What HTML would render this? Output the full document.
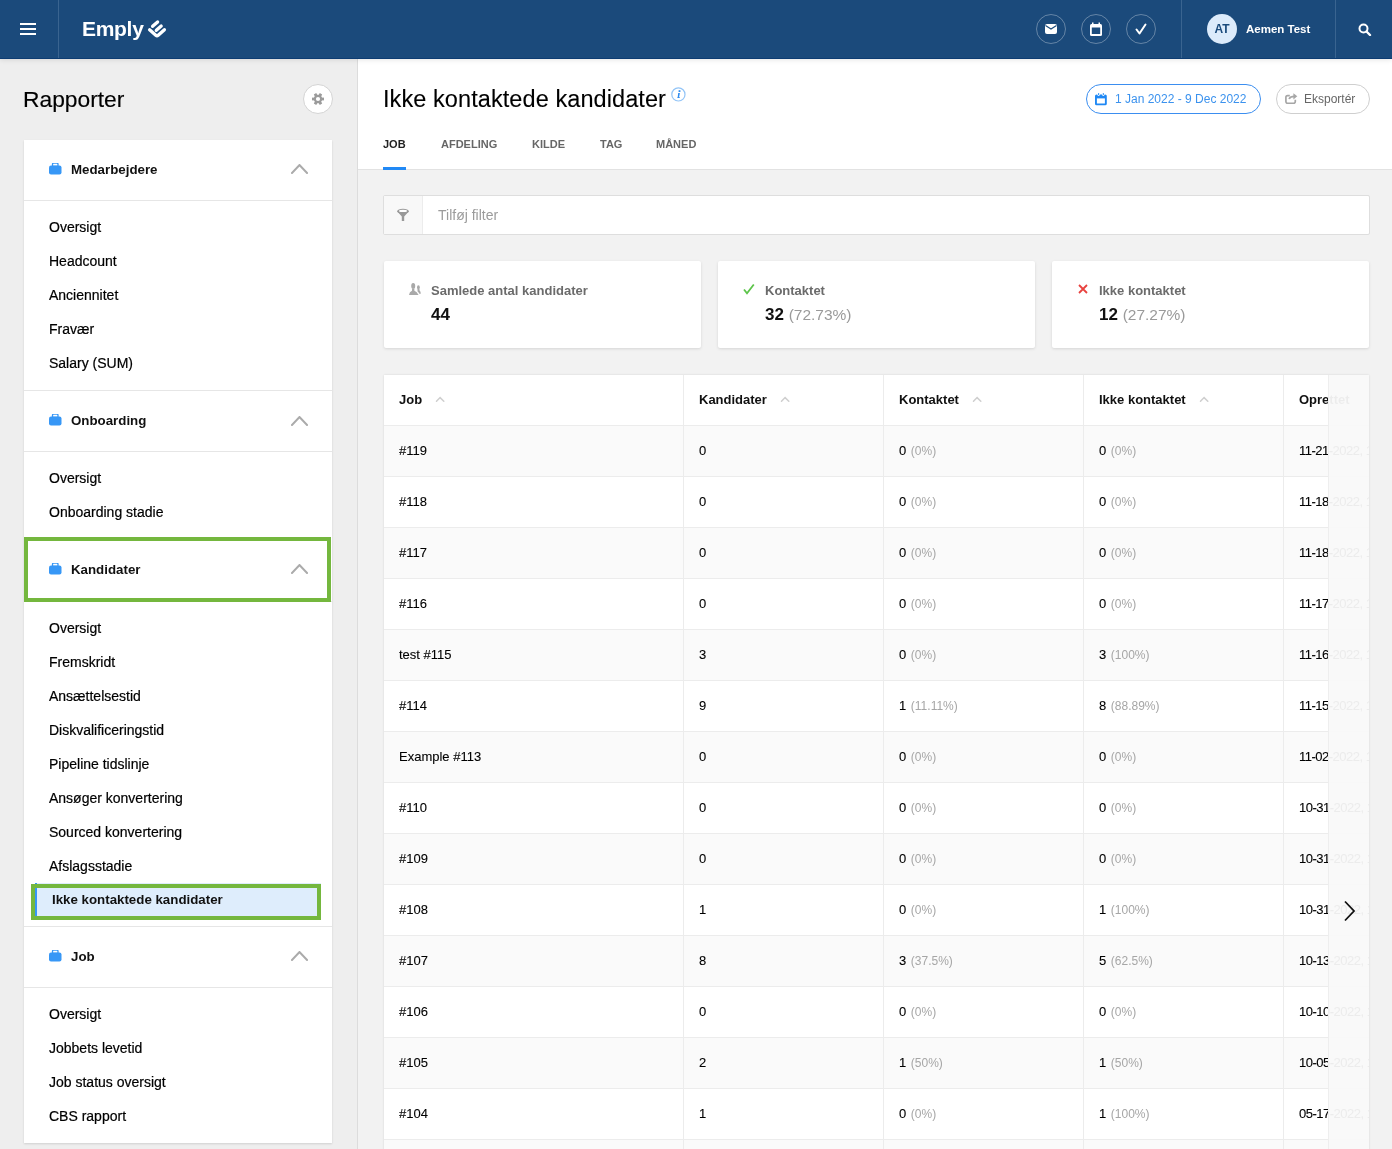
<!DOCTYPE html>
<html><head><meta charset="utf-8">
<style>
*{box-sizing:border-box;margin:0;padding:0}
html,body{width:1392px;height:1149px;overflow:hidden;background:#f2f2f2;font-family:"Liberation Sans",sans-serif;color:#1a1a1a}
.a{position:absolute;white-space:nowrap}
#hdr{position:absolute;left:0;top:0;width:1392px;height:59px;background:#1b4a7b;border-bottom:1px solid #0d3c72;z-index:5;box-shadow:0 1px 5px rgba(0,0,0,.10)}
.vdiv{position:absolute;top:0;width:1px;height:58px;background:#3a6490}
.hc{position:absolute;top:14px;width:30px;height:30px;border:1px solid rgba(255,255,255,.32);border-radius:50%}
.hc svg{position:absolute;left:0;top:0}
#side{position:absolute;left:0;top:59px;width:358px;height:1090px;background:#eeeeee;border-right:1px solid #dcdcdc}
#card{position:absolute;left:24px;top:140px;width:308px;height:1003px;background:#fff;box-shadow:0 1px 2px rgba(0,0,0,.13)}
.line{position:absolute;left:0;width:308px;height:1px;background:#e6e6e6}
.st{font-weight:bold;font-size:13.3px;line-height:20px;color:#111}
.it{font-size:14px;line-height:20px;color:#000;-webkit-text-stroke:0.2px #000}
#main{position:absolute;left:358px;top:59px;width:1034px;height:1090px;background:#f2f2f2}
#mtop{position:absolute;left:0;top:0;width:1034px;height:111px;background:#fff;border-bottom:1px solid #e2e2e2}
.tab{font-weight:bold;font-size:11px;line-height:20px;color:#666}
.scard{position:absolute;top:261px;width:317px;height:87px;background:#fff;border-radius:2px;box-shadow:0 1px 3px rgba(0,0,0,.12)}
.sl{font-weight:bold;font-size:13px;line-height:20px;color:#6b6b6b}
.sv{font-weight:bold;font-size:17px;line-height:22px;color:#111}
.sp{font-weight:normal;font-size:15.5px;color:#9a9a9a}
#tbl{position:absolute;left:384px;top:375px;width:985px;height:800px;background:#fff;box-shadow:0 0 2px rgba(0,0,0,.12);overflow:hidden}
.row{position:absolute;left:0;width:985px;height:51px;border-bottom:1px solid #ececec}
.vcol{position:absolute;top:0;width:1px;height:800px;background:#ececec}
.th{font-weight:bold;font-size:13px;line-height:20px;color:#111}
.td{font-size:13px;line-height:20px;color:#000;-webkit-text-stroke:0.1px #000}
.pc{font-size:12px;color:#a6a6a6;-webkit-text-stroke:0;margin-left:1px}
</style></head><body>
<div id="wrap" style="position:absolute;left:0;top:0;width:1392px;height:1149px;overflow:hidden;will-change:transform">
<div id="hdr"><svg class="a" style="left:20px;top:23px" width="16" height="12" viewBox="0 0 16 12"><rect x="0" y="0" width="16" height="2" fill="#fff"/><rect x="0" y="5" width="16" height="2" fill="#fff"/><rect x="0" y="10" width="16" height="2" fill="#fff"/></svg><div class="vdiv" style="left:58px"></div><div class="a" style="left:82px;top:16.4px;font-weight:bold;font-size:21px;line-height:26px;color:#fff;letter-spacing:-0.3px">Emply</div><svg class="a" style="left:140px;top:14px" width="32" height="28" viewBox="0 0 32 28"><path d="M9.6 15.8 L15.8 21.3 Q17 22.3 18.2 21.3 L24.4 15.7" stroke="#fff" stroke-width="3.3" fill="none" stroke-linecap="round" stroke-linejoin="round"/><path d="M12.6 12.3 L17.6 7.9 M16.3 16.3 L21.2 12" stroke="#fff" stroke-width="3.3" fill="none" stroke-linecap="round"/></svg><div class="hc" style="left:1036px"><svg width="28" height="28" viewBox="0 0 28 28"><rect x="8" y="9" width="12" height="10" rx="2" fill="#fff"/><path d="M8.5 10.5 L14 14 L19.5 10.5" stroke="#1b4b7c" stroke-width="1.2" fill="none"/></svg></div><div class="hc" style="left:1081px"><svg width="28" height="28" viewBox="0 0 28 28"><rect x="8" y="9" width="12" height="12" rx="1.5" fill="#fff"/><rect x="9.8" y="12.5" width="8.4" height="6.5" fill="#1b4b7c"/><rect x="10" y="7.5" width="1.5" height="3" fill="#fff"/><rect x="16.5" y="7.5" width="1.5" height="3" fill="#fff"/></svg></div><div class="hc" style="left:1126px"><svg width="28" height="28" viewBox="0 0 28 28"><path d="M9.5 14.5 L12.5 18.5 L18.5 9.5" stroke="#fff" stroke-width="2" fill="none" stroke-linecap="round" stroke-linejoin="round"/></svg></div><div class="vdiv" style="left:1181px"></div><div class="a" style="left:1207px;top:14px;width:30px;height:30px;border-radius:50%;background:#dcebfb;color:#1b4b7c;font-weight:bold;font-size:12px;line-height:30px;text-align:center">AT</div><div class="a" style="left:1246px;top:21.2px;font-weight:bold;font-size:11.5px;line-height:16px;color:#fff">Aemen Test</div><div class="vdiv" style="left:1335px"></div><svg class="a" style="left:1358px;top:23px" width="14" height="13" viewBox="0 0 14 13"><circle cx="5.5" cy="5.5" r="4" stroke="#fff" stroke-width="2" fill="none"/><path d="M8.5 8.5 L12 12" stroke="#fff" stroke-width="2.4" stroke-linecap="round"/></svg></div>
<div id="side"><div class="a" style="left:23px;top:26px;font-size:22.8px;line-height:28px;color:#000;-webkit-text-stroke:0.15px #000">Rapporter</div><div class="a" style="left:303px;top:25px;width:30px;height:30px;border-radius:50%;background:#fff;border:1px solid #d4d4d4"></div><svg class="a" style="left:312px;top:34px" width="12" height="12" viewBox="0 0 12 12"><g fill="#9b9b9b"><circle cx="6" cy="6" r="4.2"/><rect x="4.6" y="0" width="2.8" height="12" transform="rotate(30 6 6)"/><rect x="4.6" y="0" width="2.8" height="12" transform="rotate(90 6 6)"/><rect x="4.6" y="0" width="2.8" height="12" transform="rotate(150 6 6)"/></g><circle cx="6" cy="6" r="2.1" fill="#fff"/></svg></div>
<div id="card"><svg class="a" style="left:25px;top:23px" width="13" height="12" viewBox="0 0 13 12"><rect x="0" y="2.5" width="12.5" height="9" rx="2" fill="#3797f6"/><rect x="3.5" y="0.2" width="5.5" height="3.2" rx="1" fill="none" stroke="#3797f6" stroke-width="1.3"/></svg><div class="a st" style="left:47px;top:19.5px">Medarbejdere</div><svg class="a" style="left:267px;top:24px" width="17" height="10" viewBox="0 0 17 10"><path d="M1 9 L8.5 1 L16 9" stroke="#ababab" stroke-width="2" fill="none" stroke-linecap="square"/></svg><div class="line" style="top:60px"></div><div class="a it" style="left:25px;top:77.1px">Oversigt</div><div class="a it" style="left:25px;top:111.1px">Headcount</div><div class="a it" style="left:25px;top:145.1px">Anciennitet</div><div class="a it" style="left:25px;top:179.1px">Fravær</div><div class="a it" style="left:25px;top:213.1px">Salary (SUM)</div><div class="line" style="top:250px"></div><svg class="a" style="left:25px;top:274px" width="13" height="12" viewBox="0 0 13 12"><rect x="0" y="2.5" width="12.5" height="9" rx="2" fill="#3797f6"/><rect x="3.5" y="0.2" width="5.5" height="3.2" rx="1" fill="none" stroke="#3797f6" stroke-width="1.3"/></svg><div class="a st" style="left:47px;top:270.7px">Onboarding</div><svg class="a" style="left:267px;top:276px" width="17" height="10" viewBox="0 0 17 10"><path d="M1 9 L8.5 1 L16 9" stroke="#ababab" stroke-width="2" fill="none" stroke-linecap="square"/></svg><div class="line" style="top:311px"></div><div class="a it" style="left:25px;top:328.1px">Oversigt</div><div class="a it" style="left:25px;top:362.1px">Onboarding stadie</div><svg class="a" style="left:25px;top:423px" width="13" height="12" viewBox="0 0 13 12"><rect x="0" y="2.5" width="12.5" height="9" rx="2" fill="#3797f6"/><rect x="3.5" y="0.2" width="5.5" height="3.2" rx="1" fill="none" stroke="#3797f6" stroke-width="1.3"/></svg><div class="a st" style="left:47px;top:419.5px">Kandidater</div><svg class="a" style="left:267px;top:424px" width="17" height="10" viewBox="0 0 17 10"><path d="M1 9 L8.5 1 L16 9" stroke="#ababab" stroke-width="2" fill="none" stroke-linecap="square"/></svg><div class="line" style="top:461px"></div><div class="a it" style="left:25px;top:477.5px">Oversigt</div><div class="a it" style="left:25px;top:511.5px">Fremskridt</div><div class="a it" style="left:25px;top:545.5px">Ansættelsestid</div><div class="a it" style="left:25px;top:579.5px">Diskvalificeringstid</div><div class="a it" style="left:25px;top:613.5px">Pipeline tidslinje</div><div class="a it" style="left:25px;top:647.5px">Ansøger konvertering</div><div class="a it" style="left:25px;top:681.5px">Sourced konvertering</div><div class="a it" style="left:25px;top:715.5px">Afslagsstadie</div><div class="a" style="left:11px;top:743px;width:286px;height:34px;background:#deedfc;border-left:2px solid #3797f6"></div><div class="a" style="left:28px;top:749.8px;font-weight:bold;font-size:13.3px;line-height:20px;color:#111">Ikke kontaktede kandidater</div><div class="a" style="left:7px;top:744px;width:290px;height:36px;border:4px solid #74b73e"></div><div class="line" style="top:786px"></div><svg class="a" style="left:25px;top:810px" width="13" height="12" viewBox="0 0 13 12"><rect x="0" y="2.5" width="12.5" height="9" rx="2" fill="#3797f6"/><rect x="3.5" y="0.2" width="5.5" height="3.2" rx="1" fill="none" stroke="#3797f6" stroke-width="1.3"/></svg><div class="a st" style="left:47px;top:806.5px">Job</div><svg class="a" style="left:267px;top:811px" width="17" height="10" viewBox="0 0 17 10"><path d="M1 9 L8.5 1 L16 9" stroke="#ababab" stroke-width="2" fill="none" stroke-linecap="square"/></svg><div class="line" style="top:847px"></div><div class="a it" style="left:25px;top:864.3px">Oversigt</div><div class="a it" style="left:25px;top:898.3px">Jobbets levetid</div><div class="a it" style="left:25px;top:932.3px">Job status oversigt</div><div class="a it" style="left:25px;top:966.3px">CBS rapport</div><div class="a" style="left:0px;top:397px;width:307px;height:65px;border:4px solid #74b73e"></div></div>
<div id="main"><div id="mtop"></div></div>
<div class="a" style="left:383px;top:84.4px;font-size:23.5px;line-height:30px;letter-spacing:0.08px;color:#000;-webkit-text-stroke:0.1px #000">Ikke kontaktede kandidater</div><svg class="a" style="left:670.5px;top:86.5px" width="15" height="15" viewBox="0 0 15 15"><circle cx="7.4" cy="7.4" r="6.6" stroke="#92c4f7" stroke-width="1.2" fill="none"/><rect x="7.6" y="3.2" width="1.8" height="1.8" fill="#2f8cf0"/><path d="M7.2 6 L8.9 6 L8.1 10.2 L9 10.2 L8.8 11 L6.2 11 L6.4 10.2 L6.7 10.2 Z" fill="#2f8cf0"/></svg><div class="a tab" style="left:383px;top:134.3px;color:#222">JOB</div><div class="a tab" style="left:441px;top:134.3px;color:#666">AFDELING</div><div class="a tab" style="left:532px;top:134.3px;color:#666">KILDE</div><div class="a tab" style="left:600px;top:134.3px;color:#666">TAG</div><div class="a tab" style="left:656px;top:134.3px;color:#666">MÅNED</div><div class="a" style="left:383px;top:167px;width:23px;height:3px;background:#2189f5"></div><div class="a" style="left:1086px;top:84px;width:175px;height:30px;border:1px solid #3b8ef0;border-radius:15px"></div><svg class="a" style="left:1095px;top:92.5px" width="12" height="13" viewBox="0 0 12 13"><rect x="0" y="1.5" width="11.8" height="10.8" rx="1.6" fill="#1f88f4"/><rect x="1.9" y="5.4" width="8" height="5.1" fill="#fff"/><circle cx="3.6" cy="1.6" r="1.3" fill="#fff"/><circle cx="8.3" cy="1.6" r="1.3" fill="#fff"/><rect x="3.1" y="0" width="1" height="2.1" rx="0.5" fill="#1f88f4"/><rect x="7.8" y="0" width="1" height="2.1" rx="0.5" fill="#1f88f4"/></svg><div class="a" style="left:1115px;top:89.3px;font-size:12px;line-height:20px;color:#3b92ee">1 Jan 2022 - 9 Dec 2022</div><div class="a" style="left:1276px;top:84px;width:94px;height:30px;border:1px solid #cfcfcf;border-radius:15px"></div><svg class="a" style="left:1285px;top:93px" width="13" height="11" viewBox="0 0 13 11"><path d="M4.8 2.6 H2.6 Q0.9 2.6 0.9 4.3 V8.6 Q0.9 10.3 2.6 10.3 H8.6 Q10.3 10.3 10.3 8.6 V6.8" stroke="#a6a6a6" stroke-width="1.7" fill="none"/><path d="M4 6 Q5.3 3.3 9.3 3.3" stroke="#a6a6a6" stroke-width="1.7" fill="none"/><path d="M8.4 0.2 L12.3 3.3 L8.4 6.4 Z" fill="#a6a6a6"/></svg><div class="a" style="left:1304px;top:89.3px;font-size:12px;line-height:20px;color:#666">Eksportér</div><div class="a" style="left:383px;top:195px;width:987px;height:40px;background:#fff;border:1px solid #dedede;border-radius:2px"></div><div class="a" style="left:384px;top:196px;width:39px;height:38px;background:#f8f8f8;border-right:1px solid #ececec"></div><svg class="a" style="left:396px;top:208px" width="14" height="14" viewBox="0 0 14 14"><ellipse cx="7" cy="3.2" rx="5.8" ry="2.4" fill="#999"/><ellipse cx="7" cy="3.0" rx="3.8" ry="1.2" fill="#fff"/><path d="M1.5 3.8 L5.8 8.5 V13 H8.2 V8.5 L12.5 3.8 Z" fill="#999"/><ellipse cx="7" cy="3.0" rx="3.8" ry="1.1" fill="#fff"/></svg><div class="a" style="left:438px;top:204.6px;font-size:14px;line-height:20px;color:#9b9b9b">Tilføj filter</div><div class="scard" style="left:384px"></div><svg class="a" style="left:408px;top:282px" width="14" height="14" viewBox="0 0 14 14"><g fill="#a9a9a9"><ellipse cx="5.2" cy="3.9" rx="2" ry="2.9"/><path d="M1 12.9 Q1.4 9.9 4 8.8 L4.1 6.5 H6.3 L6.4 8.8 Q9 9.9 10.6 12.9 Z"/><ellipse cx="10.4" cy="5.3" rx="1.4" ry="2"/><path d="M9.4 6.5 L11.4 6.5 L11.6 8.5 Q12.8 9.3 12.8 11.8 L11.3 11.8 Q10.8 10.4 9.6 9.6 Z"/></g></svg><div class="a sl" style="left:431px;top:280.5px">Samlede antal kandidater</div><div class="a sv" style="left:431px;top:304.1px">44</div><div class="scard" style="left:718px"></div><svg class="a" style="left:743px;top:283px" width="12" height="12" viewBox="0 0 12 12"><path d="M1 6.5 L4 10.3 L10.8 1.5" stroke="#5cc44a" stroke-width="1.8" fill="none"/></svg><div class="a sl" style="left:765px;top:280.5px">Kontaktet</div><div class="a sv" style="left:765px;top:304.1px">32 <span class="sp">(72.73%)</span></div><div class="scard" style="left:1052px"></div><svg class="a" style="left:1077px;top:283px" width="12" height="12" viewBox="0 0 12 12"><path d="M2 2 L10 10 M10 2 L2 10" stroke="#e8423f" stroke-width="1.8" fill="none"/></svg><div class="a sl" style="left:1099px;top:280.5px">Ikke kontaktet</div><div class="a sv" style="left:1099px;top:304.1px">12 <span class="sp">(27.27%)</span></div><div id="tbl"><div class="row" style="top:0;height:51px;background:#fff"></div><div class="row" style="top:51px;background:#fafafa"></div><div class="row" style="top:102px;background:#fff"></div><div class="row" style="top:153px;background:#fafafa"></div><div class="row" style="top:204px;background:#fff"></div><div class="row" style="top:255px;background:#fafafa"></div><div class="row" style="top:306px;background:#fff"></div><div class="row" style="top:357px;background:#fafafa"></div><div class="row" style="top:408px;background:#fff"></div><div class="row" style="top:459px;background:#fafafa"></div><div class="row" style="top:510px;background:#fff"></div><div class="row" style="top:561px;background:#fafafa"></div><div class="row" style="top:612px;background:#fff"></div><div class="row" style="top:663px;background:#fafafa"></div><div class="row" style="top:714px;background:#fff"></div><div class="row" style="top:765px;background:#fafafa"></div><div class="vcol" style="left:299px"></div><div class="vcol" style="left:499px"></div><div class="vcol" style="left:699px"></div><div class="vcol" style="left:899px"></div><div class="a th" style="left:15px;top:14.5px">Job</div><div class="a th" style="left:315px;top:14.5px">Kandidater</div><div class="a th" style="left:515px;top:14.5px">Kontaktet</div><div class="a th" style="left:715px;top:14.5px">Ikke kontaktet</div><div class="a th" style="left:915px;top:14.5px">Oprettet</div><svg class="a" style="left:51px;top:20.5px" width="10" height="7" viewBox="0 0 10 7"><path d="M1.5 5.3 L5.1 1.6 L8.8 5.3" stroke="#cfcfcf" stroke-width="1.5" fill="none" stroke-linecap="round"/></svg><svg class="a" style="left:396px;top:20.5px" width="10" height="7" viewBox="0 0 10 7"><path d="M1.5 5.3 L5.1 1.6 L8.8 5.3" stroke="#cfcfcf" stroke-width="1.5" fill="none" stroke-linecap="round"/></svg><svg class="a" style="left:588px;top:20.5px" width="10" height="7" viewBox="0 0 10 7"><path d="M1.5 5.3 L5.1 1.6 L8.8 5.3" stroke="#cfcfcf" stroke-width="1.5" fill="none" stroke-linecap="round"/></svg><svg class="a" style="left:815px;top:20.5px" width="10" height="7" viewBox="0 0 10 7"><path d="M1.5 5.3 L5.1 1.6 L8.8 5.3" stroke="#cfcfcf" stroke-width="1.5" fill="none" stroke-linecap="round"/></svg><div class="a td" style="left:15px;top:66.2px">#119</div><div class="a td" style="left:315px;top:66.2px">0</div><div class="a td" style="left:515px;top:66.2px">0 <span class="pc">(0%)</span></div><div class="a td" style="left:715px;top:66.2px">0 <span class="pc">(0%)</span></div><div class="a td" style="left:915px;top:66.2px;letter-spacing:-0.5px">11-21-2022, 10:00</div><div class="a td" style="left:15px;top:117.2px">#118</div><div class="a td" style="left:315px;top:117.2px">0</div><div class="a td" style="left:515px;top:117.2px">0 <span class="pc">(0%)</span></div><div class="a td" style="left:715px;top:117.2px">0 <span class="pc">(0%)</span></div><div class="a td" style="left:915px;top:117.2px;letter-spacing:-0.5px">11-18-2022, 10:00</div><div class="a td" style="left:15px;top:168.2px">#117</div><div class="a td" style="left:315px;top:168.2px">0</div><div class="a td" style="left:515px;top:168.2px">0 <span class="pc">(0%)</span></div><div class="a td" style="left:715px;top:168.2px">0 <span class="pc">(0%)</span></div><div class="a td" style="left:915px;top:168.2px;letter-spacing:-0.5px">11-18-2022, 10:00</div><div class="a td" style="left:15px;top:219.2px">#116</div><div class="a td" style="left:315px;top:219.2px">0</div><div class="a td" style="left:515px;top:219.2px">0 <span class="pc">(0%)</span></div><div class="a td" style="left:715px;top:219.2px">0 <span class="pc">(0%)</span></div><div class="a td" style="left:915px;top:219.2px;letter-spacing:-0.5px">11-17-2022, 10:00</div><div class="a td" style="left:15px;top:270.2px">test #115</div><div class="a td" style="left:315px;top:270.2px">3</div><div class="a td" style="left:515px;top:270.2px">0 <span class="pc">(0%)</span></div><div class="a td" style="left:715px;top:270.2px">3 <span class="pc">(100%)</span></div><div class="a td" style="left:915px;top:270.2px;letter-spacing:-0.5px">11-16-2022, 10:00</div><div class="a td" style="left:15px;top:321.2px">#114</div><div class="a td" style="left:315px;top:321.2px">9</div><div class="a td" style="left:515px;top:321.2px">1 <span class="pc">(11.11%)</span></div><div class="a td" style="left:715px;top:321.2px">8 <span class="pc">(88.89%)</span></div><div class="a td" style="left:915px;top:321.2px;letter-spacing:-0.5px">11-15-2022, 10:00</div><div class="a td" style="left:15px;top:372.2px">Example #113</div><div class="a td" style="left:315px;top:372.2px">0</div><div class="a td" style="left:515px;top:372.2px">0 <span class="pc">(0%)</span></div><div class="a td" style="left:715px;top:372.2px">0 <span class="pc">(0%)</span></div><div class="a td" style="left:915px;top:372.2px;letter-spacing:-0.5px">11-02-2022, 10:00</div><div class="a td" style="left:15px;top:423.2px">#110</div><div class="a td" style="left:315px;top:423.2px">0</div><div class="a td" style="left:515px;top:423.2px">0 <span class="pc">(0%)</span></div><div class="a td" style="left:715px;top:423.2px">0 <span class="pc">(0%)</span></div><div class="a td" style="left:915px;top:423.2px;letter-spacing:-0.5px">10-31-2022, 10:00</div><div class="a td" style="left:15px;top:474.2px">#109</div><div class="a td" style="left:315px;top:474.2px">0</div><div class="a td" style="left:515px;top:474.2px">0 <span class="pc">(0%)</span></div><div class="a td" style="left:715px;top:474.2px">0 <span class="pc">(0%)</span></div><div class="a td" style="left:915px;top:474.2px;letter-spacing:-0.5px">10-31-2022, 10:00</div><div class="a td" style="left:15px;top:525.2px">#108</div><div class="a td" style="left:315px;top:525.2px">1</div><div class="a td" style="left:515px;top:525.2px">0 <span class="pc">(0%)</span></div><div class="a td" style="left:715px;top:525.2px">1 <span class="pc">(100%)</span></div><div class="a td" style="left:915px;top:525.2px;letter-spacing:-0.5px">10-31-2022, 10:00</div><div class="a td" style="left:15px;top:576.2px">#107</div><div class="a td" style="left:315px;top:576.2px">8</div><div class="a td" style="left:515px;top:576.2px">3 <span class="pc">(37.5%)</span></div><div class="a td" style="left:715px;top:576.2px">5 <span class="pc">(62.5%)</span></div><div class="a td" style="left:915px;top:576.2px;letter-spacing:-0.5px">10-13-2022, 10:00</div><div class="a td" style="left:15px;top:627.2px">#106</div><div class="a td" style="left:315px;top:627.2px">0</div><div class="a td" style="left:515px;top:627.2px">0 <span class="pc">(0%)</span></div><div class="a td" style="left:715px;top:627.2px">0 <span class="pc">(0%)</span></div><div class="a td" style="left:915px;top:627.2px;letter-spacing:-0.5px">10-10-2022, 10:00</div><div class="a td" style="left:15px;top:678.2px">#105</div><div class="a td" style="left:315px;top:678.2px">2</div><div class="a td" style="left:515px;top:678.2px">1 <span class="pc">(50%)</span></div><div class="a td" style="left:715px;top:678.2px">1 <span class="pc">(50%)</span></div><div class="a td" style="left:915px;top:678.2px;letter-spacing:-0.5px">10-05-2022, 10:00</div><div class="a td" style="left:15px;top:729.2px">#104</div><div class="a td" style="left:315px;top:729.2px">1</div><div class="a td" style="left:515px;top:729.2px">0 <span class="pc">(0%)</span></div><div class="a td" style="left:715px;top:729.2px">1 <span class="pc">(100%)</span></div><div class="a td" style="left:915px;top:729.2px;letter-spacing:-0.5px">05-17-2022, 10:00</div><div class="a td" style="left:15px;top:780.2px">#103</div><div class="a td" style="left:315px;top:780.2px">0</div><div class="a td" style="left:515px;top:780.2px">0 <span class="pc">(0%)</span></div><div class="a td" style="left:715px;top:780.2px">0 <span class="pc">(0%)</span></div><div class="a td" style="left:915px;top:780.2px;letter-spacing:-0.5px">05-17-2022, 10:00</div><div class="a" style="left:944px;top:0;width:41px;height:800px;background:rgba(249,249,249,.95);border-left:1px solid #eeeeee"></div></div><svg class="a" style="left:1343px;top:900px" width="13" height="22" viewBox="0 0 13 22"><path d="M2 1.5 L11 11 L2 20.5" stroke="#111" stroke-width="1.8" fill="none"/></svg></div></body></html>
